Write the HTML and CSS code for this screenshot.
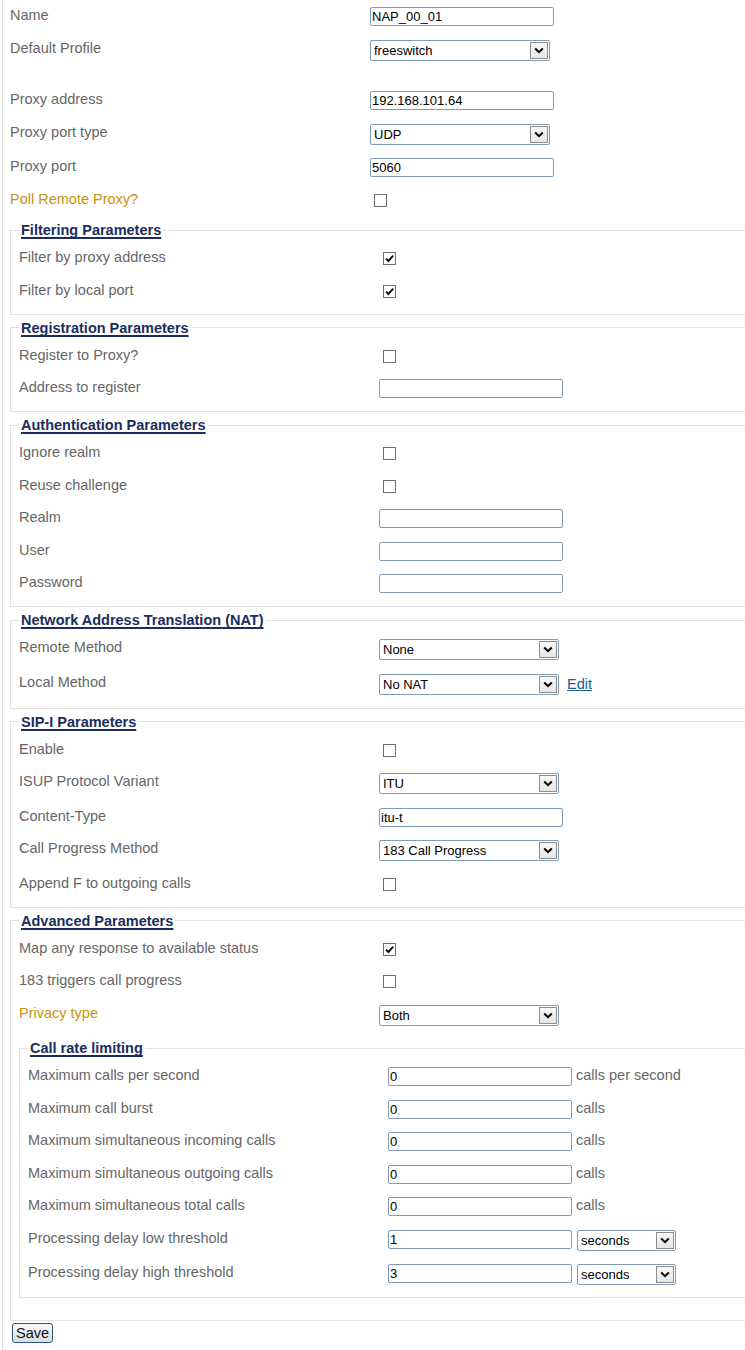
FILE: index.html
```html
<!DOCTYPE html>
<html>
<head>
<meta charset="utf-8">
<title>NAP</title>
<link rel="stylesheet" href="styles.css">
</head>
<body>
<div class="page">
  <form class="form">
    <div class="row"><label class="lbl">Name</label><input class="txt" type="text" value="NAP_00_01"></div>
    <div class="row"><label class="lbl">Default Profile</label><span class="sel"><select><option>freeswitch</option></select><span class="arrow"><svg width="10" height="7" viewBox="0 0 10 7"><path d="M1.2 1.5 L5 5.2 L8.8 1.5" fill="none" stroke="#000" stroke-width="2"/></svg></span></span></div>
    <div class="spacer"></div>
    <div class="row"><label class="lbl">Proxy address</label><input class="txt" type="text" value="192.168.101.64"></div>
    <div class="row"><label class="lbl">Proxy port type</label><span class="sel"><select><option>UDP</option></select><span class="arrow"><svg width="10" height="7" viewBox="0 0 10 7"><path d="M1.2 1.5 L5 5.2 L8.8 1.5" fill="none" stroke="#000" stroke-width="2"/></svg></span></span></div>
    <div class="row"><label class="lbl">Proxy port</label><input class="txt" type="text" value="5060"></div>
    <div class="row"><label class="lbl gold">Poll Remote Proxy?</label><span class="cb"><input type="checkbox"></span></div>

    <fieldset class="group first">
      <legend><span>Filtering Parameters</span></legend>
      <div class="row"><label class="lbl">Filter by proxy address</label><span class="cb"><input type="checkbox" checked><svg class="tick" width="13" height="13" viewBox="0 0 13 13"><path d="M3 6.6 L5.4 9 L10.2 3.6" fill="none" stroke="#111" stroke-width="2"/></svg></span></div>
      <div class="row"><label class="lbl">Filter by local port</label><span class="cb"><input type="checkbox" checked><svg class="tick" width="13" height="13" viewBox="0 0 13 13"><path d="M3 6.6 L5.4 9 L10.2 3.6" fill="none" stroke="#111" stroke-width="2"/></svg></span></div>
    </fieldset>

    <fieldset class="group">
      <legend><span>Registration Parameters</span></legend>
      <div class="row"><label class="lbl">Register to Proxy?</label><span class="cb"><input type="checkbox"></span></div>
      <div class="row"><label class="lbl">Address to register</label><input class="txt" type="text" value=""></div>
    </fieldset>

    <fieldset class="group">
      <legend><span>Authentication Parameters</span></legend>
      <div class="row"><label class="lbl">Ignore realm</label><span class="cb"><input type="checkbox"></span></div>
      <div class="row"><label class="lbl">Reuse challenge</label><span class="cb"><input type="checkbox"></span></div>
      <div class="row"><label class="lbl">Realm</label><input class="txt" type="text" value=""></div>
      <div class="row"><label class="lbl">User</label><input class="txt" type="text" value=""></div>
      <div class="row"><label class="lbl">Password</label><input class="txt" type="password" value=""></div>
    </fieldset>

    <fieldset class="group">
      <legend><span>Network Address Translation (NAT)</span></legend>
      <div class="row"><label class="lbl">Remote Method</label><span class="sel"><select><option>None</option></select><span class="arrow"><svg width="10" height="7" viewBox="0 0 10 7"><path d="M1.2 1.5 L5 5.2 L8.8 1.5" fill="none" stroke="#000" stroke-width="2"/></svg></span></span></div>
      <div class="row"><label class="lbl">Local Method</label><span class="sel"><select><option>No NAT</option></select><span class="arrow"><svg width="10" height="7" viewBox="0 0 10 7"><path d="M1.2 1.5 L5 5.2 L8.8 1.5" fill="none" stroke="#000" stroke-width="2"/></svg></span></span><a class="edit" href="#">Edit</a></div>
    </fieldset>

    <fieldset class="group">
      <legend><span>SIP-I Parameters</span></legend>
      <div class="row"><label class="lbl">Enable</label><span class="cb"><input type="checkbox"></span></div>
      <div class="row"><label class="lbl">ISUP Protocol Variant</label><span class="sel"><select><option>ITU</option></select><span class="arrow"><svg width="10" height="7" viewBox="0 0 10 7"><path d="M1.2 1.5 L5 5.2 L8.8 1.5" fill="none" stroke="#000" stroke-width="2"/></svg></span></span></div>
      <div class="row"><label class="lbl">Content-Type</label><input class="txt" type="text" value="itu-t"></div>
      <div class="row"><label class="lbl">Call Progress Method</label><span class="sel"><select><option>183 Call Progress</option></select><span class="arrow"><svg width="10" height="7" viewBox="0 0 10 7"><path d="M1.2 1.5 L5 5.2 L8.8 1.5" fill="none" stroke="#000" stroke-width="2"/></svg></span></span></div>
      <div class="row"><label class="lbl">Append F to outgoing calls</label><span class="cb"><input type="checkbox"></span></div>
    </fieldset>

    <fieldset class="group">
      <legend><span>Advanced Parameters</span></legend>
      <div class="row"><label class="lbl">Map any response to available status</label><span class="cb"><input type="checkbox" checked><svg class="tick" width="13" height="13" viewBox="0 0 13 13"><path d="M3 6.6 L5.4 9 L10.2 3.6" fill="none" stroke="#111" stroke-width="2"/></svg></span></div>
      <div class="row"><label class="lbl">183 triggers call progress</label><span class="cb"><input type="checkbox"></span></div>
      <div class="row"><label class="lbl gold">Privacy type</label><span class="sel"><select><option>Both</option></select><span class="arrow"><svg width="10" height="7" viewBox="0 0 10 7"><path d="M1.2 1.5 L5 5.2 L8.8 1.5" fill="none" stroke="#000" stroke-width="2"/></svg></span></span></div>

      <fieldset class="group nested">
        <legend><span>Call rate limiting</span></legend>
        <div class="row"><label class="lbl">Maximum calls per second</label><input class="txt" type="text" value="0"><span class="unit">calls per second</span></div>
        <div class="row"><label class="lbl">Maximum call burst</label><input class="txt" type="text" value="0"><span class="unit">calls</span></div>
        <div class="row"><label class="lbl">Maximum simultaneous incoming calls</label><input class="txt" type="text" value="0"><span class="unit">calls</span></div>
        <div class="row"><label class="lbl">Maximum simultaneous outgoing calls</label><input class="txt" type="text" value="0"><span class="unit">calls</span></div>
        <div class="row"><label class="lbl">Maximum simultaneous total calls</label><input class="txt" type="text" value="0"><span class="unit">calls</span></div>
        <div class="row"><label class="lbl">Processing delay low threshold</label><input class="txt" type="text" value="1"><span class="sel small"><select><option>seconds</option></select><span class="arrow"><svg width="10" height="7" viewBox="0 0 10 7"><path d="M1.2 1.5 L5 5.2 L8.8 1.5" fill="none" stroke="#000" stroke-width="2"/></svg></span></span></div>
        <div class="row"><label class="lbl">Processing delay high threshold</label><input class="txt" type="text" value="3"><span class="sel small"><select><option>seconds</option></select><span class="arrow"><svg width="10" height="7" viewBox="0 0 10 7"><path d="M1.2 1.5 L5 5.2 L8.8 1.5" fill="none" stroke="#000" stroke-width="2"/></svg></span></span></div>
      </fieldset>
    </fieldset>

    <div class="actions"><button type="button" class="save">Save</button></div>
  </form>
</div>
</body>
</html>
```

FILE: styles.css
```css
html, body {
  margin: 0;
  padding: 0;
  background: #fff;
}

body {
  font-family: "Liberation Sans", Arial, sans-serif;
  font-size: 14.5px;
  color: #666;
  overflow: hidden;
}

.page {
  margin-left: 2px;
  border-left: 1px solid #e2e2e2;
  padding-left: 7px;
  min-height: 1350px;
}

.form {
  margin: 0;
}

.row {
  display: flex;
  align-items: flex-start;
  padding: 7px 0 6.5px;
}

.lbl {
  flex: 0 0 360px;
  line-height: 17px;
  color: #666;
}

.lbl.gold {
  color: #c8930e;
}

.spacer {
  height: 17px;
}

.txt {
  box-sizing: border-box;
  width: 184px;
  height: 19px;
  margin: 0;
  padding: 1px 1px;
  border: 1px solid #7f9db9;
  border-radius: 2px;
  font-family: "Liberation Sans", Arial, sans-serif;
  font-size: 13px;
  color: #000;
  background: #fff;
  outline: none;
}

.sel {
  position: relative;
  display: inline-block;
  width: 180px;
  height: 21px;
}

.sel.small {
  width: 99px;
  margin-left: 5px;
}

.sel select {
  -webkit-appearance: none;
  appearance: none;
  box-sizing: border-box;
  width: 100%;
  height: 21px;
  margin: 0;
  padding: 0 0 0 3px;
  border: 1px solid #7f9db9;
  border-radius: 2px;
  background: #fff;
  font-family: "Liberation Sans", Arial, sans-serif;
  font-size: 13px;
  color: #000;
  outline: none;
}

.sel .arrow {
  position: absolute;
  top: 2px;
  right: 2px;
  width: 18px;
  height: 17px;
  box-sizing: border-box;
  border: 1px solid #8d8d8d;
  background: linear-gradient(#f7f7f7, #e6e6e6);
  display: flex;
  align-items: center;
  justify-content: center;
  pointer-events: none;
}

.sel .arrow svg {
  display: block;
}

.cb {
  position: relative;
  display: inline-flex;
}

.cb input {
  -webkit-appearance: none;
  appearance: none;
  box-sizing: border-box;
  width: 13px;
  height: 13px;
  margin: 3px 3px 3px 4px;
  border: 1px solid #6f6f6f;
  background: #fff;
  border-radius: 0;
}

.cb .tick {
  position: absolute;
  left: 4px;
  top: 3px;
  pointer-events: none;
}

.unit {
  margin-left: 4px;
  line-height: 17px;
  color: #666;
}

.edit {
  margin-left: 8px;
  line-height: 21px;
  color: #1a5a97;
  text-decoration: underline;
}

.group {
  margin: 5px 0 0;
  padding: 4px 0 6.5px 8px;
  border: 1px solid #e2e2e2;
  border-right: 0;
  min-width: 0;
}

.group.first {
  margin-top: 6px;
}

.group legend {
  padding: 0 2px;
  font-weight: bold;
  font-size: 14.5px;
  color: #1b2d5e;
}

.group legend span {
  text-decoration: underline;
  text-decoration-thickness: 2px;
  text-underline-offset: 2px;
  text-decoration-skip-ink: none;
}

.group .nested {
  margin: 8px 0 16px;
  padding-bottom: 5px;
}

.actions {
  padding: 2px 0 0 2px;
}

.save {
  box-sizing: border-box;
  height: 20px;
  margin: 0;
  padding: 0 3px;
  border: 1px solid #2c5680;
  border-radius: 3px;
  background: linear-gradient(#fbfbfb, #dcdcdc);
  font-family: "Liberation Sans", Arial, sans-serif;
  font-size: 14.5px;
  color: #111;
  line-height: 17px;
}
```
